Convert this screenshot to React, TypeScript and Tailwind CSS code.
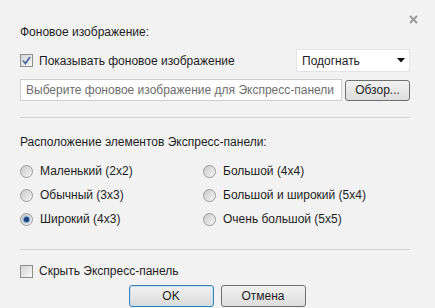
import React from 'react';

const Checkbox = ({ checked }: { checked?: boolean }) => (
  <span className="w-[13px] h-[13px] border border-[#8e8f8f] bg-gradient-to-br from-[#d4d4d4] to-[#f8f8f8] flex items-center justify-center shrink-0">
    {checked && (
      <svg width="11" height="11" viewBox="0 0 11 11">
        <path d="M2 5.5 L4.5 8.5 L9 2" fill="none" stroke="#4d6aa3" strokeWidth="1.8" />
      </svg>
    )}
  </span>
);

const Radio = ({ checked }: { checked?: boolean }) => (
  <span className="w-[13px] h-[13px] rounded-full border border-[#9a9a9a] bg-gradient-to-br from-[#c9c9c9] to-[#f6f6f6] flex items-center justify-center shrink-0">
    {checked && (
      <span className="w-[5px] h-[5px] rounded-full bg-[#1c3f78] shadow-[0_0_1px_1px_#6d9fd0]" />
    )}
  </span>
);

const RadioRow = ({ label, checked }: { label: string; checked?: boolean }) => (
  <div className="h-6 flex items-center gap-[7px]">
    <Radio checked={checked} />
    <span>{label}</span>
  </div>
);

const GrayButton = ({ children, className }: { children: React.ReactNode; className?: string }) => (
  <button className={`rounded-[3px] border border-[#707070] bg-gradient-to-b from-[#f2f2f2] to-[#dddddd] text-[#1e1e1e] ${className ?? ''}`}>
    {children}
  </button>
);

export default function App() {
  return (
    <div className="w-[435px] h-[308px] bg-[#f2f2f2] relative overflow-hidden font-['Liberation_Sans',sans-serif] text-[12px] leading-4 text-[#1e1e1e]">
      <span className="absolute left-[408px] top-[14px] w-[10px] h-[10px] flex items-center justify-center">
        <svg width="9" height="9" viewBox="0 0 9 9">
          <path d="M1 1 L8 8 M8 1 L1 8" stroke="#9a9a9a" strokeWidth="2" />
        </svg>
      </span>

      <div className="pl-5 pr-[25px] pt-6 flex flex-col">
        <div className="h-4">Фоновое изображение:</div>

        <div className="mt-[9px] h-[23px] flex items-center">
          <Checkbox checked />
          <span className="ml-[6px]">Показывать фоновое изображение</span>
          <div className="ml-auto w-[114px] h-[23px] bg-white border border-[#e3e3e3] flex items-center pl-[5px] pr-[4px]">
            <span className="flex-1">Подогнать</span>
            <svg width="8" height="5" viewBox="0 0 8 5">
              <path d="M0 0 H8 L4 4.5 Z" fill="#111" />
            </svg>
          </div>
        </div>

        <div className="mt-[7px] h-[22px] flex items-center gap-[3px]">
          <div className="flex-1 h-[22px] bg-white border border-[#cfcfcf] flex items-center pl-[5px] text-[#6d6d6d] whitespace-nowrap overflow-hidden">
            Выберите фоновое изображение для Экспресс-панели
          </div>
          <GrayButton className="w-[65px] h-[21px]">Обзор...</GrayButton>
        </div>

        <div className="mt-4 h-px bg-[#d2d2d2]" />

        <div className="mt-4 h-4">Расположение элементов Экспресс-панели:</div>

        <div className="mt-[9px] grid grid-cols-[183px_1fr]">
          <RadioRow label="Маленький (2x2)" />
          <RadioRow label="Большой (4x4)" />
          <RadioRow label="Обычный (3x3)" />
          <RadioRow label="Большой и широкий (5x4)" />
          <RadioRow label="Широкий (4x3)" checked />
          <RadioRow label="Очень большой (5x5)" />
        </div>

        <div className="mt-[18px] h-px bg-[#d2d2d2]" />

        <div className="mt-[13px] h-4 flex items-center">
          <Checkbox />
          <span className="ml-[6px]">Скрыть Экспресс-панель</span>
        </div>
      </div>

      <div className="mt-[6px] flex justify-center gap-[7px] pr-[1px]">
        <button className="w-[85px] h-[22px] rounded-[3px] border border-[#3c7fb1] bg-gradient-to-b from-[#f2f2f2] to-[#dadada] shadow-[inset_0_0_0_1px_#bfe3fb] text-[#1e1e1e]">
          OK
        </button>
        <GrayButton className="w-[85px] h-[22px]">Отмена</GrayButton>
      </div>
    </div>
  );
}
